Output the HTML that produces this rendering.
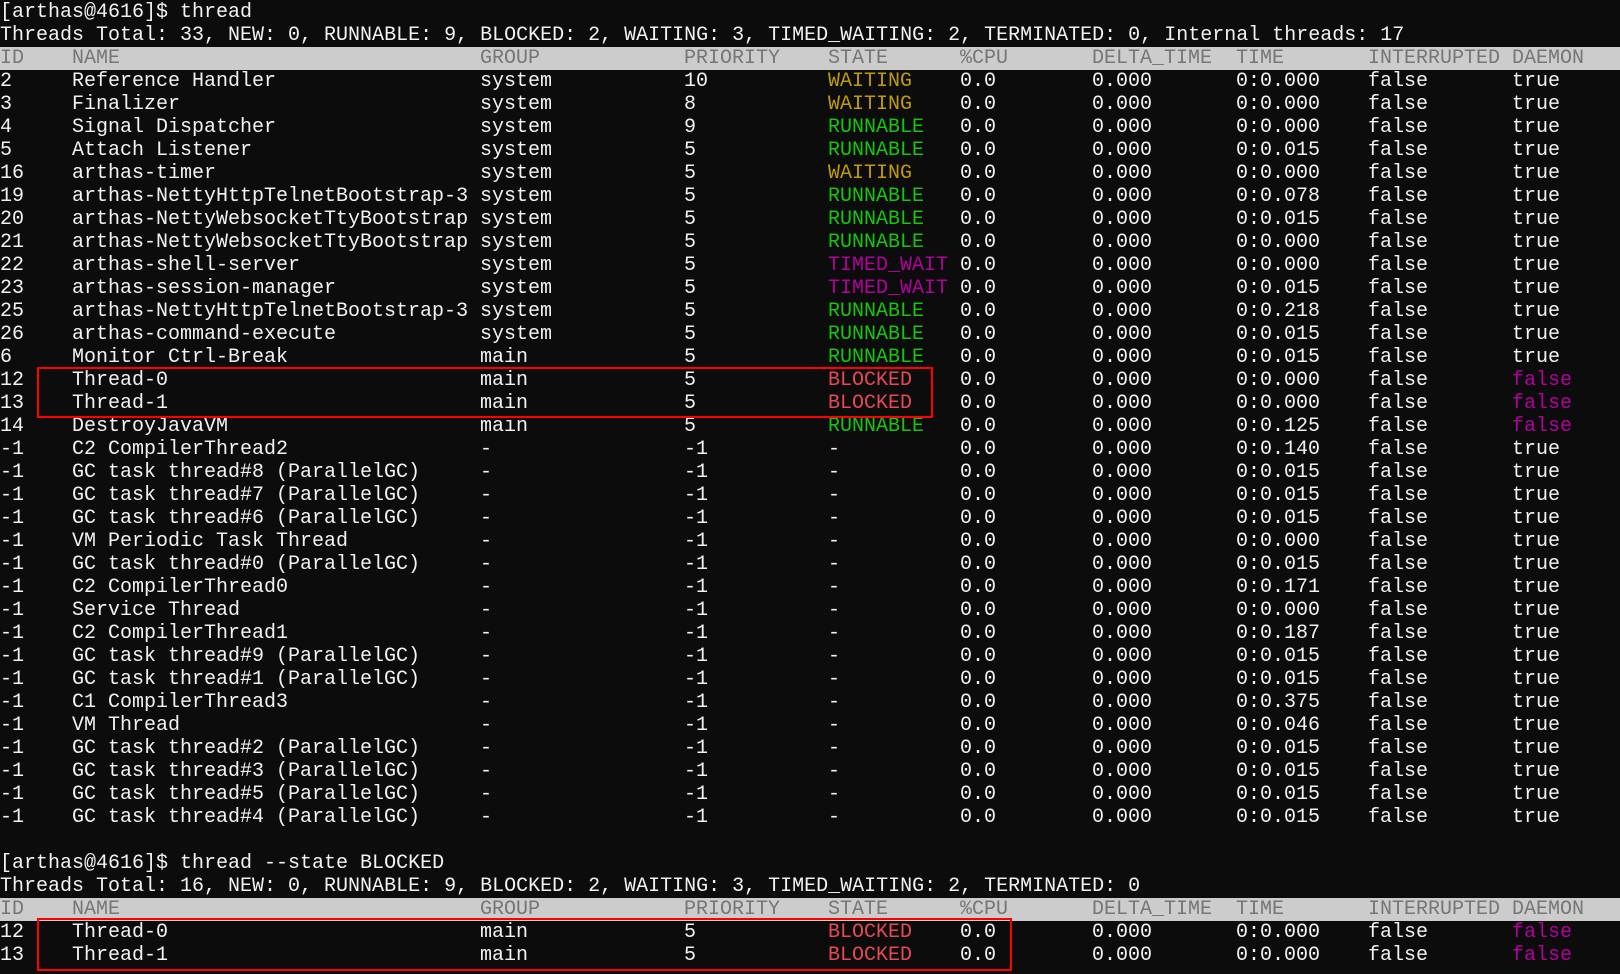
<!DOCTYPE html>
<html><head><meta charset="utf-8"><style>
body{margin:0;background:#0c0c0c;width:1620px;height:974px;overflow:hidden;position:relative}
.t{position:absolute;left:0;top:1px;font-family:"Liberation Mono","Noto Sans CJK SC",monospace;font-size:20px;line-height:23px;color:#f2f2f2}
.r{height:23px;white-space:pre}
.r span{display:inline-block;overflow:visible}
.a{width:72px}.b{width:408px}.c{width:204px}.d{width:144px}.e{width:132px}.f{width:132px}.g{width:144px}.h{width:132px}.i{width:144px}
.hd{background:#cccccc;color:#767676;width:1620px}
.y{color:#c19c00}.gr{color:#16c60c}.p{color:#b4009e}.rd{color:#e74856}
.box{position:absolute;border:2px solid #f00;box-sizing:border-box}
</style></head><body><div class="t"><div class="r">[arthas@4616]$ thread</div><div class="r">Threads Total: 33, NEW: 0, RUNNABLE: 9, BLOCKED: 2, WAITING: 3, TIMED_WAITING: 2, TERMINATED: 0, Internal threads: 17</div><div class="r hd"><span class="a">ID</span><span class="b">NAME</span><span class="c">GROUP</span><span class="d">PRIORITY</span><span class="e">STATE</span><span class="f">%CPU</span><span class="g">DELTA_TIME</span><span class="h">TIME</span><span class="i">INTERRUPTED</span><span>DAEMON</span></div>
<div class="r"><span class="a">2</span><span class="b">Reference Handler</span><span class="c">system</span><span class="d">10</span><span class="e y">WAITING</span><span class="f">0.0</span><span class="g">0.000</span><span class="h">0:0.000</span><span class="i">false</span><span>true</span></div>
<div class="r"><span class="a">3</span><span class="b">Finalizer</span><span class="c">system</span><span class="d">8</span><span class="e y">WAITING</span><span class="f">0.0</span><span class="g">0.000</span><span class="h">0:0.000</span><span class="i">false</span><span>true</span></div>
<div class="r"><span class="a">4</span><span class="b">Signal Dispatcher</span><span class="c">system</span><span class="d">9</span><span class="e gr">RUNNABLE</span><span class="f">0.0</span><span class="g">0.000</span><span class="h">0:0.000</span><span class="i">false</span><span>true</span></div>
<div class="r"><span class="a">5</span><span class="b">Attach Listener</span><span class="c">system</span><span class="d">5</span><span class="e gr">RUNNABLE</span><span class="f">0.0</span><span class="g">0.000</span><span class="h">0:0.015</span><span class="i">false</span><span>true</span></div>
<div class="r"><span class="a">16</span><span class="b">arthas-timer</span><span class="c">system</span><span class="d">5</span><span class="e y">WAITING</span><span class="f">0.0</span><span class="g">0.000</span><span class="h">0:0.000</span><span class="i">false</span><span>true</span></div>
<div class="r"><span class="a">19</span><span class="b">arthas-NettyHttpTelnetBootstrap-3</span><span class="c">system</span><span class="d">5</span><span class="e gr">RUNNABLE</span><span class="f">0.0</span><span class="g">0.000</span><span class="h">0:0.078</span><span class="i">false</span><span>true</span></div>
<div class="r"><span class="a">20</span><span class="b">arthas-NettyWebsocketTtyBootstrap</span><span class="c">system</span><span class="d">5</span><span class="e gr">RUNNABLE</span><span class="f">0.0</span><span class="g">0.000</span><span class="h">0:0.015</span><span class="i">false</span><span>true</span></div>
<div class="r"><span class="a">21</span><span class="b">arthas-NettyWebsocketTtyBootstrap</span><span class="c">system</span><span class="d">5</span><span class="e gr">RUNNABLE</span><span class="f">0.0</span><span class="g">0.000</span><span class="h">0:0.000</span><span class="i">false</span><span>true</span></div>
<div class="r"><span class="a">22</span><span class="b">arthas-shell-server</span><span class="c">system</span><span class="d">5</span><span class="e p">TIMED_WAIT</span><span class="f">0.0</span><span class="g">0.000</span><span class="h">0:0.000</span><span class="i">false</span><span>true</span></div>
<div class="r"><span class="a">23</span><span class="b">arthas-session-manager</span><span class="c">system</span><span class="d">5</span><span class="e p">TIMED_WAIT</span><span class="f">0.0</span><span class="g">0.000</span><span class="h">0:0.015</span><span class="i">false</span><span>true</span></div>
<div class="r"><span class="a">25</span><span class="b">arthas-NettyHttpTelnetBootstrap-3</span><span class="c">system</span><span class="d">5</span><span class="e gr">RUNNABLE</span><span class="f">0.0</span><span class="g">0.000</span><span class="h">0:0.218</span><span class="i">false</span><span>true</span></div>
<div class="r"><span class="a">26</span><span class="b">arthas-command-execute</span><span class="c">system</span><span class="d">5</span><span class="e gr">RUNNABLE</span><span class="f">0.0</span><span class="g">0.000</span><span class="h">0:0.015</span><span class="i">false</span><span>true</span></div>
<div class="r"><span class="a">6</span><span class="b">Monitor Ctrl-Break</span><span class="c">main</span><span class="d">5</span><span class="e gr">RUNNABLE</span><span class="f">0.0</span><span class="g">0.000</span><span class="h">0:0.015</span><span class="i">false</span><span>true</span></div>
<div class="r"><span class="a">12</span><span class="b">Thread-0</span><span class="c">main</span><span class="d">5</span><span class="e rd">BLOCKED</span><span class="f">0.0</span><span class="g">0.000</span><span class="h">0:0.000</span><span class="i">false</span><span class="p">false</span></div>
<div class="r"><span class="a">13</span><span class="b">Thread-1</span><span class="c">main</span><span class="d">5</span><span class="e rd">BLOCKED</span><span class="f">0.0</span><span class="g">0.000</span><span class="h">0:0.000</span><span class="i">false</span><span class="p">false</span></div>
<div class="r"><span class="a">14</span><span class="b">DestroyJavaVM</span><span class="c">main</span><span class="d">5</span><span class="e gr">RUNNABLE</span><span class="f">0.0</span><span class="g">0.000</span><span class="h">0:0.125</span><span class="i">false</span><span class="p">false</span></div>
<div class="r"><span class="a">-1</span><span class="b">C2 CompilerThread2</span><span class="c">-</span><span class="d">-1</span><span class="e">-</span><span class="f">0.0</span><span class="g">0.000</span><span class="h">0:0.140</span><span class="i">false</span><span>true</span></div>
<div class="r"><span class="a">-1</span><span class="b">GC task thread#8 (ParallelGC)</span><span class="c">-</span><span class="d">-1</span><span class="e">-</span><span class="f">0.0</span><span class="g">0.000</span><span class="h">0:0.015</span><span class="i">false</span><span>true</span></div>
<div class="r"><span class="a">-1</span><span class="b">GC task thread#7 (ParallelGC)</span><span class="c">-</span><span class="d">-1</span><span class="e">-</span><span class="f">0.0</span><span class="g">0.000</span><span class="h">0:0.015</span><span class="i">false</span><span>true</span></div>
<div class="r"><span class="a">-1</span><span class="b">GC task thread#6 (ParallelGC)</span><span class="c">-</span><span class="d">-1</span><span class="e">-</span><span class="f">0.0</span><span class="g">0.000</span><span class="h">0:0.015</span><span class="i">false</span><span>true</span></div>
<div class="r"><span class="a">-1</span><span class="b">VM Periodic Task Thread</span><span class="c">-</span><span class="d">-1</span><span class="e">-</span><span class="f">0.0</span><span class="g">0.000</span><span class="h">0:0.000</span><span class="i">false</span><span>true</span></div>
<div class="r"><span class="a">-1</span><span class="b">GC task thread#0 (ParallelGC)</span><span class="c">-</span><span class="d">-1</span><span class="e">-</span><span class="f">0.0</span><span class="g">0.000</span><span class="h">0:0.015</span><span class="i">false</span><span>true</span></div>
<div class="r"><span class="a">-1</span><span class="b">C2 CompilerThread0</span><span class="c">-</span><span class="d">-1</span><span class="e">-</span><span class="f">0.0</span><span class="g">0.000</span><span class="h">0:0.171</span><span class="i">false</span><span>true</span></div>
<div class="r"><span class="a">-1</span><span class="b">Service Thread</span><span class="c">-</span><span class="d">-1</span><span class="e">-</span><span class="f">0.0</span><span class="g">0.000</span><span class="h">0:0.000</span><span class="i">false</span><span>true</span></div>
<div class="r"><span class="a">-1</span><span class="b">C2 CompilerThread1</span><span class="c">-</span><span class="d">-1</span><span class="e">-</span><span class="f">0.0</span><span class="g">0.000</span><span class="h">0:0.187</span><span class="i">false</span><span>true</span></div>
<div class="r"><span class="a">-1</span><span class="b">GC task thread#9 (ParallelGC)</span><span class="c">-</span><span class="d">-1</span><span class="e">-</span><span class="f">0.0</span><span class="g">0.000</span><span class="h">0:0.015</span><span class="i">false</span><span>true</span></div>
<div class="r"><span class="a">-1</span><span class="b">GC task thread#1 (ParallelGC)</span><span class="c">-</span><span class="d">-1</span><span class="e">-</span><span class="f">0.0</span><span class="g">0.000</span><span class="h">0:0.015</span><span class="i">false</span><span>true</span></div>
<div class="r"><span class="a">-1</span><span class="b">C1 CompilerThread3</span><span class="c">-</span><span class="d">-1</span><span class="e">-</span><span class="f">0.0</span><span class="g">0.000</span><span class="h">0:0.375</span><span class="i">false</span><span>true</span></div>
<div class="r"><span class="a">-1</span><span class="b">VM Thread</span><span class="c">-</span><span class="d">-1</span><span class="e">-</span><span class="f">0.0</span><span class="g">0.000</span><span class="h">0:0.046</span><span class="i">false</span><span>true</span></div>
<div class="r"><span class="a">-1</span><span class="b">GC task thread#2 (ParallelGC)</span><span class="c">-</span><span class="d">-1</span><span class="e">-</span><span class="f">0.0</span><span class="g">0.000</span><span class="h">0:0.015</span><span class="i">false</span><span>true</span></div>
<div class="r"><span class="a">-1</span><span class="b">GC task thread#3 (ParallelGC)</span><span class="c">-</span><span class="d">-1</span><span class="e">-</span><span class="f">0.0</span><span class="g">0.000</span><span class="h">0:0.015</span><span class="i">false</span><span>true</span></div>
<div class="r"><span class="a">-1</span><span class="b">GC task thread#5 (ParallelGC)</span><span class="c">-</span><span class="d">-1</span><span class="e">-</span><span class="f">0.0</span><span class="g">0.000</span><span class="h">0:0.015</span><span class="i">false</span><span>true</span></div>
<div class="r"><span class="a">-1</span><span class="b">GC task thread#4 (ParallelGC)</span><span class="c">-</span><span class="d">-1</span><span class="e">-</span><span class="f">0.0</span><span class="g">0.000</span><span class="h">0:0.015</span><span class="i">false</span><span>true</span></div>
<div class="r"> </div>
<div class="r">[arthas@4616]$ thread --state BLOCKED</div>
<div class="r">Threads Total: 16, NEW: 0, RUNNABLE: 9, BLOCKED: 2, WAITING: 3, TIMED_WAITING: 2, TERMINATED: 0</div>
<div class="r hd"><span class="a">ID</span><span class="b">NAME</span><span class="c">GROUP</span><span class="d">PRIORITY</span><span class="e">STATE</span><span class="f">%CPU</span><span class="g">DELTA_TIME</span><span class="h">TIME</span><span class="i">INTERRUPTED</span><span>DAEMON</span></div>
<div class="r"><span class="a">12</span><span class="b">Thread-0</span><span class="c">main</span><span class="d">5</span><span class="e rd">BLOCKED</span><span class="f">0.0</span><span class="g">0.000</span><span class="h">0:0.000</span><span class="i">false</span><span class="p">false</span></div>
<div class="r"><span class="a">13</span><span class="b">Thread-1</span><span class="c">main</span><span class="d">5</span><span class="e rd">BLOCKED</span><span class="f">0.0</span><span class="g">0.000</span><span class="h">0:0.000</span><span class="i">false</span><span class="p">false</span></div>
</div>
<div class="box" style="left:37px;top:367px;width:896px;height:51px"></div>
<div class="box" style="left:37px;top:918px;width:975px;height:53px"></div>
</body></html>
